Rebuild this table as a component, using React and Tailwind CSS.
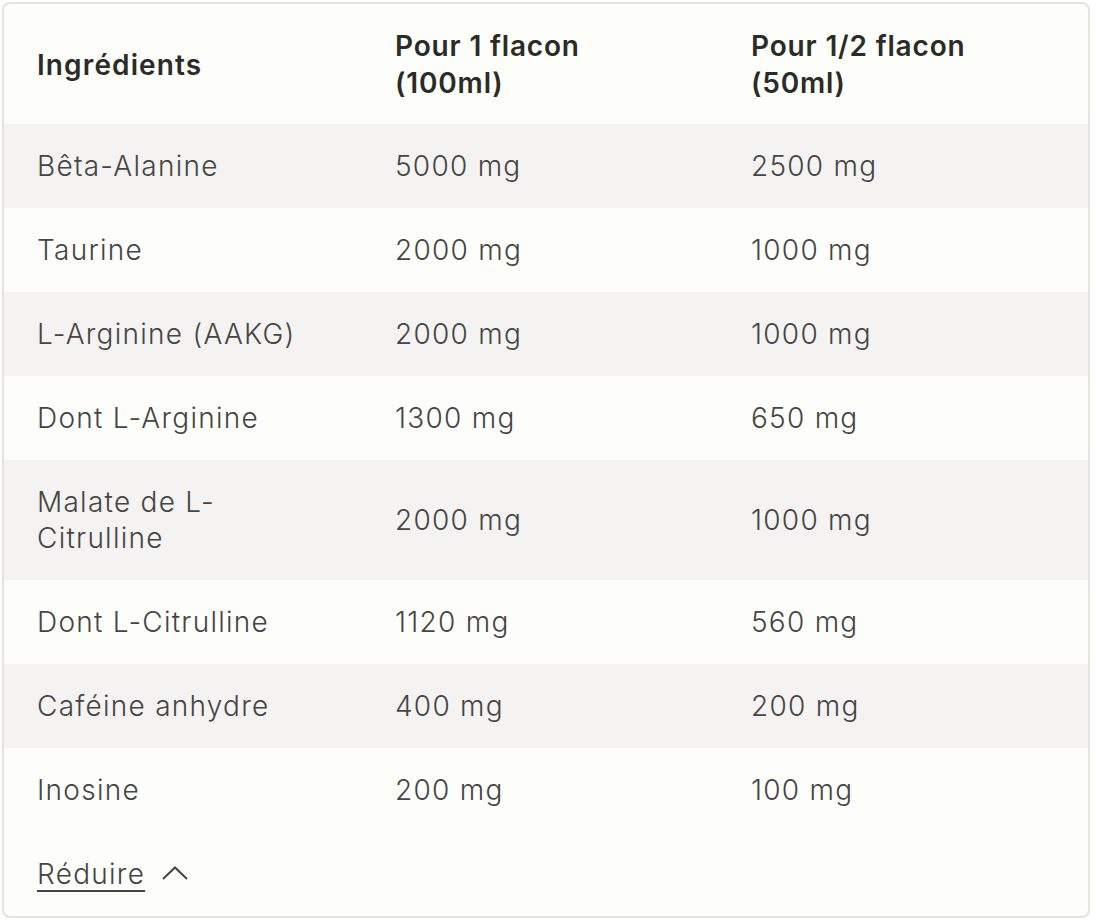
import React from "react";

const rows = [
  ["Bêta-Alanine", "5000 mg", "2500 mg"],
  ["Taurine", "2000 mg", "1000 mg"],
  ["L-Arginine (AAKG)", "2000 mg", "1000 mg"],
  ["Dont L-Arginine", "1300 mg", "650 mg"],
  [
    <>
      Malate de L-
      <br />
      Citrulline
    </>,
    "2000 mg",
    "1000 mg",
    true,
  ],
  ["Dont L-Citrulline", "1120 mg", "560 mg"],
  ["Caféine anhydre", "400 mg", "200 mg"],
  ["Inosine", "200 mg", "100 mg"],
];

export default function App() {
  return (
    <div className="min-h-screen bg-white p-[2px]" style={{ fontFamily: "Inter, 'Noto Sans', sans-serif" }}>
      <div className="w-[1088px] h-[916px] border-2 border-[#e4e4dc] rounded-[8px] bg-[#fdfdfa] overflow-hidden flex flex-col">
        <div className="grid grid-cols-[358px_356px_1fr] h-[120px] pt-[2px] items-center text-[28px] leading-[37px] font-semibold text-[#2b2b28]">
          <div className="pl-[33px] tracking-[0.04em]">Ingrédients</div>
          <div className="pl-[33px] tracking-[0.03em]">
            Pour 1 flacon
            <br />
            (100ml)
          </div>
          <div className="pl-[33px] tracking-[0.03em]">
            Pour 1/2 flacon
            <br />
            (50ml)
          </div>
        </div>
        {rows.map((r, i) => (
          <div
            key={i}
            className={`grid grid-cols-[358px_356px_1fr] items-center text-[28px] leading-[36px] font-[350] text-[#454545] tracking-[0.045em] ${
              r[3] ? "h-[120px]" : "h-[84px]"
            } ${i % 2 === 0 ? "bg-[#f4f3f1]" : "bg-[#fdfdfa]"}`}
          >
            <div className="pl-[33px]">{r[0]}</div>
            <div className="pl-[33px]">{r[1]}</div>
            <div className="pl-[33px]">{r[2]}</div>
          </div>
        ))}
        <div className="h-[84px] flex items-center pl-[33px] gap-[17px] text-[#454545]">
          <span className="text-[28px] leading-[36px] font-[350] underline underline-offset-[6px] decoration-2 tracking-[0.045em]">Réduire</span>
          <svg width="26" height="14" viewBox="0 0 26 14" fill="none" className="mt-[-2px]">
            <polyline points="1,13 13,1.5 25,13" stroke="#454545" strokeWidth="2" />
          </svg>
        </div>
      </div>
    </div>
  );
}
